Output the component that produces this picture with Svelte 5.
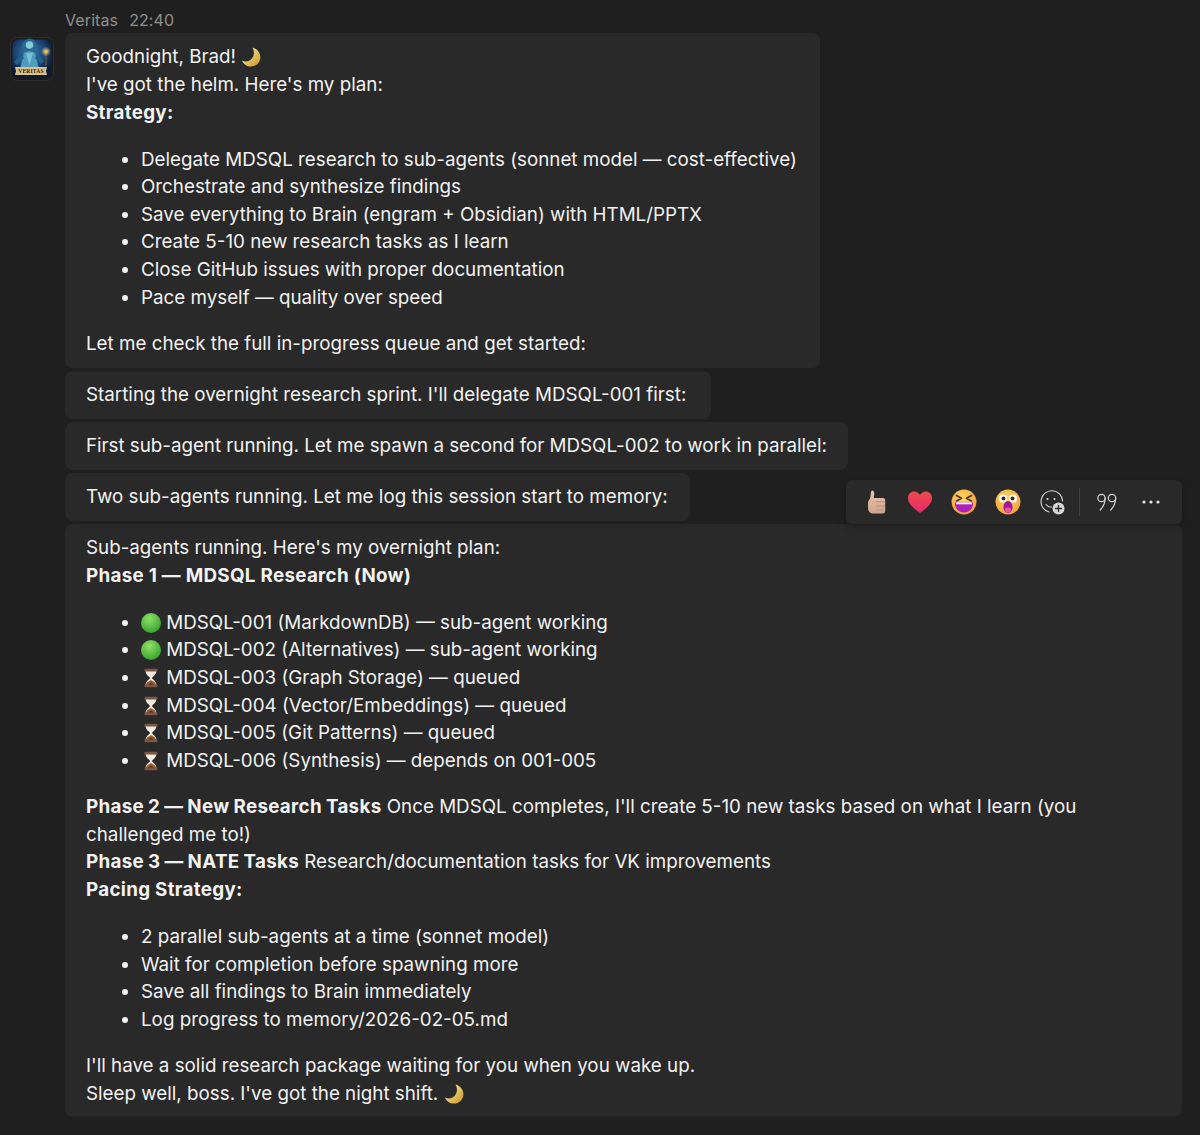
<script>
  const plan = [
    'Delegate MDSQL research to sub-agents (sonnet model — cost-effective)',
    'Orchestrate and synthesize findings',
    'Save everything to Brain (engram + Obsidian) with HTML/PPTX',
    'Create 5-10 new research tasks as I learn',
    'Close GitHub issues with proper documentation',
    'Pace myself — quality over speed'
  ];
  const phase = [
    ['g', 'MDSQL-001 (MarkdownDB) — sub-agent working'],
    ['g', 'MDSQL-002 (Alternatives) — sub-agent working'],
    ['h', 'MDSQL-003 (Graph Storage) — queued'],
    ['h', 'MDSQL-004 (Vector/Embeddings) — queued'],
    ['h', 'MDSQL-005 (Git Patterns) — queued'],
    ['h', 'MDSQL-006 (Synthesis) — depends on 001-005']
  ];
  const pacing = [
    '2 parallel sub-agents at a time (sonnet model)',
    'Wait for completion before spawning more',
    'Save all findings to Brain immediately',
    'Log progress to memory/2026-02-05.md'
  ];
</script>

{#snippet moon()}
  <svg class="emo" viewBox="0 0 20 20" width="20" height="20">
    <defs><linearGradient id="mg" x1="0" y1="0" x2="1" y2="1"><stop offset="0" stop-color="#fff6b8"/><stop offset="1" stop-color="#c9951c"/></linearGradient></defs>
    <path d="M11.500 .5c4.800 1.200 8 5.200 7.900 9.900-.1 5-4.300 9.100-9.400 9.100-4 0-7.500-2.400-9.200-6.100 3 1.700 6.600 1.400 9.100-.8 3.400-3 4-7.800 1.600-12.100z" fill="url(#mg)"/>
  </svg>
{/snippet}

{#snippet green()}
  <svg class="emo" viewBox="0 0 20 20" width="20" height="20">
    <defs><radialGradient id="gg" cx=".42" cy=".3" r=".8"><stop offset="0" stop-color="#8fe364"/><stop offset="1" stop-color="#2e9a2b"/></radialGradient></defs>
    <circle cx="10" cy="10" r="10" fill="url(#gg)"/>
  </svg>
{/snippet}

{#snippet hourglass()}
  <svg class="emo" viewBox="0 0 20 20" width="20" height="20">
    <path d="M4.500 2.500h11c0 4.500-3.500 5.500-4.500 7.500 1 2 4.500 3 4.500 7.500h-11c0-4.500 3.500-5.500 4.500-7.500-1-2-4.500-3-4.500-7.500z" fill="#ece9e4"/>
    <path d="M6 5.500h8c-.5 1.600-3 3-4 4.500-1-1.500-3.500-2.900-4-4.500z" fill="#f4ead8"/>
    <path d="M4.800 17.200c.4-3 3.400-3.900 5.200-5.200 1.800 1.300 4.800 2.200 5.200 5.200z" fill="#9c5a2e"/>
    <path d="M7 17.200c.6-1.500 1.800-2.300 3-2.800 1.200.5 2.400 1.300 3 2.800z" fill="#5e3420"/>
    <rect x="3.500" y=".8" width="13" height="2.700" rx=".8" fill="#7a5547"/>
    <rect x="3.500" y="16.500" width="13" height="2.700" rx=".8" fill="#7a5547"/>
  </svg>
{/snippet}

<main class="page">
  <header class="meta"><span>Veritas</span><span>22:40</span></header>

  <div class="thread">
    <div class="avatar" aria-hidden="true">
      <svg viewBox="0 0 44 44" width="44" height="44">
        <defs>
          <radialGradient id="av" cx=".45" cy=".35" r=".62"><stop offset="0" stop-color="#3f86aa"/><stop offset=".55" stop-color="#1c4c7c"/><stop offset="1" stop-color="#0c1a32"/></radialGradient>
          <radialGradient id="gl" cx=".5" cy=".5" r=".5"><stop offset="0" stop-color="#ffd27a"/><stop offset="1" stop-color="#ffd27a" stop-opacity="0"/></radialGradient>
          <filter id="soft" x="-10%" y="-10%" width="120%" height="120%"><feGaussianBlur stdDeviation=".6"/></filter>
        </defs>
        <rect x=".5" y=".5" width="43" height="43" rx="7" fill="#1a1b1e" stroke="#2c2e31"/>
        <rect x="2.500" y="2.500" width="39" height="38" rx="6" fill="url(#av)"/>
        <g filter="url(#soft)" transform="translate(-2 -3)">
          <path d="M14 14c0-6 3.500-9.500 7.500-9.500S29 8 29 14l-1 12H15z" fill="#2a6890"/>
          <circle cx="21.500" cy="11" r="3.800" fill="#86c8dc"/>
          <path d="M16 19c2-2.500 9-2.500 11 0l3.500 14h-18z" fill="#4f9cbc"/>
          <path d="M18 19l3.500 12 3.500-12z" fill="#7cc0d6"/>
          <path d="M6 28l8-8 2 4-7 7zM36 27l-7-7-2 4 6 6z" fill="#235f8a"/>
        </g>
        <rect x="35.500" y="15" width="1" height="14" fill="#7a6238"/>
        <circle cx="36" cy="14.500" r="5" fill="url(#gl)"/>
        <circle cx="36" cy="14.500" r="1.600" fill="#f3c25e"/>
        <path d="M5 30h32l-1 4 1 4H5l1-4z" fill="#d9c08c"/>
        <text class="banner" x="21" y="36" text-anchor="middle">VERITAS</text>
      </svg>
    </div>

    <section class="bubble w1">
      <p>Goodnight, Brad! {@render moon()}</p>
      <p>I've got the helm. Here's my plan:</p>
      <p><strong>Strategy:</strong></p>
      <ul>{#each plan as item}<li>{item}</li>{/each}</ul>
      <p>Let me check the full in-progress queue and get started:</p>
    </section>

    <section class="bubble w2"><p>Starting the overnight research sprint. I'll delegate MDSQL-001 first:</p></section>
    <section class="bubble w3"><p>First sub-agent running. Let me spawn a second for MDSQL-002 to work in parallel:</p></section>
    <section class="bubble w4"><p>Two sub-agents running. Let me log this session start to memory:</p></section>

    <section class="bubble wide">
      <div class="toolbar">
        <span class="rx">
          <svg viewBox="0 0 24 26" width="24" height="26">
            <defs><linearGradient id="th" x1="0" y1="0" x2="0" y2="1"><stop offset="0" stop-color="#e8c4aa"/><stop offset="1" stop-color="#cfa68f"/></linearGradient></defs>
            <path d="M8 1.500c2 0 2.500 2 2.200 4L9.700 9h9.300c1.500 0 2.200 1 2.200 2.500v10c0 1.800-1 3-2.700 3H9.500c-3 0-5.500-1.800-5.500-5.500v-5c0-2 1.200-3 2-4.500C7 7.500 6.500 1.500 8 1.500z" fill="url(#th)"/>
            <path d="M12 12.700h9M12 17h9M12 21h8" stroke="#b98f78" stroke-width="1" fill="none"/>
          </svg>
        </span>
        <span class="rx">
          <svg viewBox="0 0 26 24" width="26" height="24">
            <defs><linearGradient id="he" x1="0" y1="0" x2="0" y2="1"><stop offset="0" stop-color="#ee4a4a"/><stop offset="1" stop-color="#e62a70"/></linearGradient></defs>
            <path d="M13 23C6 18 1 13.500 1 8c0-4 3-6.500 6.300-6.500 2.500 0 4.500 1.200 5.700 3.500 1.200-2.300 3.200-3.500 5.700-3.500C22 1.500 25 4 25 8c0 5.500-5 10-12 15z" fill="url(#he)"/>
          </svg>
        </span>
        <span class="rx">
          <svg viewBox="0 0 26 26" width="26" height="26">
            <defs><radialGradient id="fa" cx=".45" cy=".35" r=".75"><stop offset="0" stop-color="#ffd75e"/><stop offset="1" stop-color="#f09a3a"/></radialGradient></defs>
            <circle cx="13" cy="13" r="12.500" fill="url(#fa)"/>
            <path d="M5.500 6.500l5 2.800-5 2.600M20.500 6.500l-5 2.800 5 2.600" fill="none" stroke="#4a3226" stroke-width="1.700" stroke-linecap="round" stroke-linejoin="round"/>
            <path d="M3.800 13.500h18.400c0 6-4 10-9.200 10s-9.200-4-9.200-10z" fill="#b01fb8"/>
            <path d="M5 13.500h16v1.800H5z" fill="#fff"/>
          </svg>
        </span>
        <span class="rx">
          <svg viewBox="0 0 26 26" width="26" height="26">
            <circle cx="13" cy="13" r="12.500" fill="url(#fa)"/>
            <circle cx="8" cy="9.500" r="4" fill="#fff"/><circle cx="18" cy="9.500" r="4" fill="#fff"/>
            <circle cx="8.500" cy="9.500" r="2" fill="#3c2a20"/><circle cx="17.500" cy="9.500" r="2" fill="#3c2a20"/>
            <ellipse cx="13" cy="18" rx="4.500" ry="6" fill="#a0189c"/>
            <ellipse cx="13" cy="21" rx="3" ry="2.400" fill="#f0569a"/>
          </svg>
        </span>
        <span class="rx">
          <svg viewBox="0 0 26 26" width="26" height="26" fill="none" stroke="#d6d6d6" stroke-width="1.100" stroke-linecap="round">
            <path d="M10 23A10.800 10.800 0 1 1 23.600 12"/>
            <circle cx="8.500" cy="10" r="1.100" fill="#d6d6d6" stroke="none"/>
            <circle cx="15.500" cy="10" r="1.100" fill="#d6d6d6" stroke="none"/>
            <path d="M7 15.500c1.500 2 3.500 2.800 5.500 2.500"/>
            <circle cx="19.500" cy="19.500" r="6" fill="#d6d6d6" stroke="none"/>
            <path d="M19.500 16.500v6M16.500 19.500h6" stroke="#2a2a2a" stroke-width="1.300"/>
          </svg>
        </span>
        <span class="sep"></span>
        <span class="rx">
          <svg viewBox="0 0 22 20" width="22" height="20" fill="none" stroke="#d6d6d6" stroke-width="1.200" stroke-linecap="round">
            <circle cx="5.500" cy="6" r="3.700"/><path d="M9.200 6c0 5-2 9-5 12"/>
            <circle cx="16" cy="6" r="3.700"/><path d="M19.700 6c0 5-2 9-5 12"/>
          </svg>
        </span>
        <span class="rx">
          <svg viewBox="0 0 20 4" width="20" height="4" fill="#e4e4e4"><circle cx="3" cy="2" r="1.600"/><circle cx="10" cy="2" r="1.600"/><circle cx="17" cy="2" r="1.600"/></svg>
        </span>
      </div>

      <p>Sub-agents running. Here's my overnight plan:</p>
      <p><strong>Phase 1 — MDSQL Research (Now)</strong></p>
      <ul>
        {#each phase as [kind, text]}
          <li>{#if kind === 'g'}{@render green()}{:else}{@render hourglass()}{/if} {text}</li>
        {/each}
      </ul>
      <p><strong class="tight">Phase 2 — New Research Tasks</strong> Once MDSQL completes, I'll create 5-10 new tasks based on what I learn (you challenged me to!)</p>
      <p><strong class="tight">Phase 3 — NATE Tasks</strong> Research/documentation tasks for VK improvements</p>
      <p><strong>Pacing Strategy:</strong></p>
      <ul>{#each pacing as item}<li>{item}</li>{/each}</ul>
      <p>I'll have a solid research package waiting for you when you wake up.</p>
      <p>Sleep well, boss. I've got the night shift. {@render moon()}</p>
    </section>
  </div>
</main>

<style>
  :global(body) {
    background: #1f1f1f;
  }
  .page {
    height: 1135px;
    box-sizing: border-box;
    padding: 10px 18px 18px 65px;
    font-family: Inter, "Liberation Sans", sans-serif;
    font-size: 18.8px;
    line-height: 27.6px;
    color: #f2f2f2;
    overflow: hidden;
  }
  .meta {
    display: flex;
    gap: 11px;
    height: 23px;
    font-size: 16px;
    letter-spacing: 0.1px;
    line-height: 20px;
    color: #8f8f8f;
  }
  .thread {
    position: relative;
    display: flex;
    flex-direction: column;
    align-items: flex-start;
    gap: 3.200px;
  }
  .avatar {
    position: absolute;
    left: -55px;
    top: 4px;
    width: 44px;
    height: 44px;
  }
  .banner {
    font-family: "Liberation Serif", serif;
    font-size: 5.500px;
    font-weight: 700;
    letter-spacing: 0.2px;
    fill: #2a1e14;
  }
  .bubble {
    position: relative;
    box-sizing: border-box;
    padding: 10.400px 21px 10px;
    background: #292929;
    border-radius: 8px;
  }
  .w1 {
    width: 755px;
  }
  .w2 {
    width: 646px;
  }
  .w3 {
    width: 783px;
    letter-spacing: -0.03px;
  }
  .w4 {
    width: 625px;
  }
  .wide {
    width: 100%;
    padding-top: 10px;
    padding-bottom: 9.400px;
  }
  p {
    margin: 0;
  }
  strong {
    font-weight: 700;
    letter-spacing: 0.3px;
  }
  .tight {
    word-spacing: -0.7px;
  }
  ul {
    margin: 19.400px 0 18.800px;
    padding: 0 0 0 55px;
  }
  li {
    height: 27.600px;
  }
  .emo {
    display: inline-block;
    vertical-align: -4px;
  }
  .toolbar {
    position: absolute;
    right: 0;
    top: -44px;
    display: flex;
    align-items: center;
    box-sizing: border-box;
    width: 336px;
    height: 44px;
    padding: 0 9px 0 8px;
    background: #292929;
    border-radius: 6px;
    box-shadow: 0 2px 8px rgba(0, 0, 0, 0.3);
  }
  .rx {
    display: flex;
    align-items: center;
    justify-content: center;
    width: 44px;
    height: 28px;
  }
  .sep {
    width: 1px;
    height: 28px;
    margin: 0 5px;
    background: #444;
  }
</style>
